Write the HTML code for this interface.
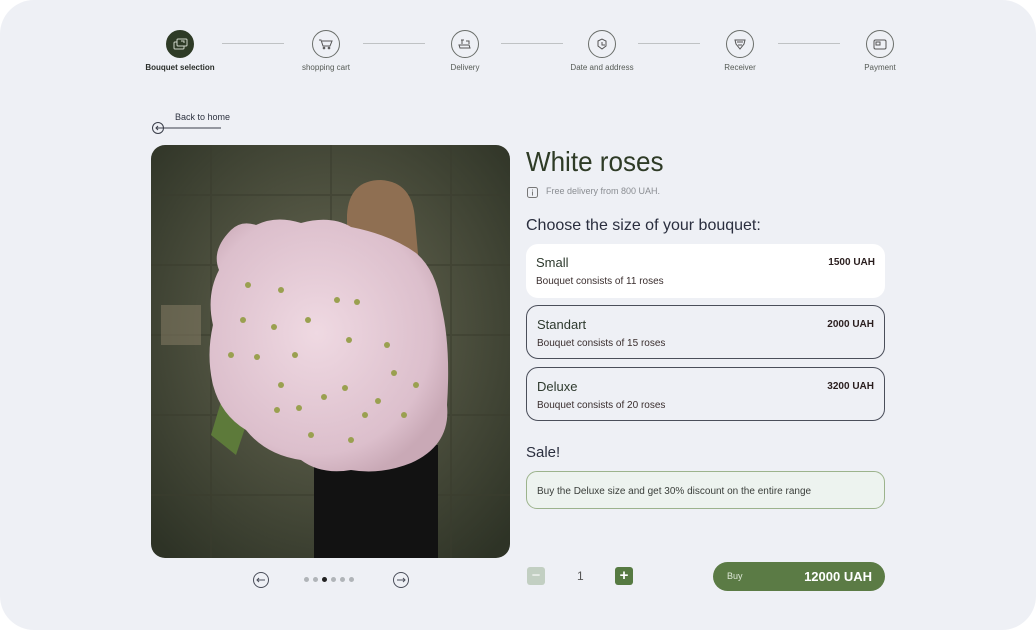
<!DOCTYPE html>
<html><head><meta charset="utf-8"><style>
*{box-sizing:border-box;margin:0;padding:0}
body{width:1036px;height:630px;background:#fff;font-family:"Liberation Sans",Arial,sans-serif;position:relative;overflow:hidden}
.panel{position:absolute;left:0;top:0;width:1036px;height:630px;background:#eef0f5;border-radius:34px}
.step{position:absolute;top:30px;width:28px;height:28px;border-radius:50%;border:1px solid #6a6e6a;display:flex;align-items:center;justify-content:center}
.lbl{position:absolute;top:63px;font-size:8px;color:#555a55;transform:translateX(-50%);white-space:nowrap}
.line{position:absolute;top:43px;height:1px;background:#bfc2c4}
.abs{position:absolute}
.card{position:absolute;left:526px;width:359px;height:54px;border-radius:12px;border:1px solid #4a4e5a}
.card .t{position:absolute;left:10px;top:11px;font-size:13px;color:#2e3a2e}
.card .p{position:absolute;right:10px;top:13px;font-size:10px;font-weight:bold;color:#2a1e1e}
.card .d{position:absolute;left:10px;top:32px;font-size:10px;color:#3a2e2e}
</style></head><body>
<div class="panel"></div>
<div class="step" style="left:166px;background:#2e3b26;border-color:#2e3b26"><svg width="16" height="14" viewBox="0 0 16 14" fill="none" stroke="#cfd6c8" stroke-width="1"><rect x="2" y="5" width="10" height="7" rx="1"/><rect x="5" y="2" width="10" height="7" rx="1" fill="#2e3b26"/><path d="M9 4h3v2"/></svg></div>
<div class="lbl" style="left:180px;color:#2a2e2a;font-weight:bold">Bouquet selection</div>
<div class="line" style="left:222px;width:62px"></div>
<div class="step" style="left:312px"><svg width="16" height="14" viewBox="0 0 16 14" fill="none" stroke="#555" stroke-width="1"><path d="M1 3h2l2 6h7l2-5H4"/><circle cx="6" cy="11" r=".8"/><circle cx="11" cy="11" r=".8"/></svg></div>
<div class="lbl" style="left:326px">shopping cart</div>
<div class="line" style="left:363px;width:62px"></div>
<div class="step" style="left:451px"><svg width="16" height="14" viewBox="0 0 16 14" fill="none" stroke="#555" stroke-width="1"><path d="M2 8h10l1 3H3zM4 3h3M5 3v4M9 4h3v3"/></svg></div>
<div class="lbl" style="left:465px">Delivery</div>
<div class="line" style="left:501px;width:62px"></div>
<div class="step" style="left:588px"><svg width="16" height="14" viewBox="0 0 16 14" fill="none" stroke="#555" stroke-width="1"><path d="M4 4l4-2 4 2v5l-4 3-4-3z"/><path d="M8 5v3h3"/></svg></div>
<div class="lbl" style="left:602px">Date and address</div>
<div class="line" style="left:638px;width:62px"></div>
<div class="step" style="left:726px"><svg width="16" height="14" viewBox="0 0 16 14" fill="none" stroke="#555" stroke-width="1"><path d="M3 3l10 0-1 4-4 5-4-5z"/><path d="M5 5h6M6 8h4"/></svg></div>
<div class="lbl" style="left:740px">Receiver</div>
<div class="line" style="left:778px;width:62px"></div>
<div class="step" style="left:866px"><svg width="16" height="14" viewBox="0 0 16 14" fill="none" stroke="#555" stroke-width="1"><rect x="2" y="3" width="12" height="9" rx="1.5"/><rect x="4" y="5" width="4" height="3"/></svg></div>
<div class="lbl" style="left:880px">Payment</div>
<div class="abs" style="left:175px;top:112px;font-size:9px;color:#2e3340">Back to home</div>
<svg class="abs" style="left:151px;top:121px" width="72" height="14" viewBox="0 0 72 14" fill="none" stroke="#3a3e4a" stroke-width="1"><circle cx="7" cy="7" r="5.5"/><path d="M5 7h65M7 5l-2 2 2 2"/></svg>
<svg class="abs" style="left:151px;top:145px;border-radius:14px" width="359" height="413" viewBox="0 0 359 413">
<defs><radialGradient id="bg" cx="50%" cy="45%" r="70%"><stop offset="0" stop-color="#6a6b55"/><stop offset="1" stop-color="#2e3326"/></radialGradient>
<radialGradient id="fl" cx="45%" cy="45%" r="60%"><stop offset="0" stop-color="#efd9e2"/><stop offset=".8" stop-color="#dcbfcc"/><stop offset="1" stop-color="#c9a9b6"/></radialGradient></defs>
<rect width="359" height="413" fill="url(#bg)"/>
<g stroke="#3b3d2e" stroke-width="2" opacity=".5"><path d="M0 50H359M0 120H359M0 190H359M0 270H359M0 350H359M60 0V413M180 0V120M300 0V413"/></g>
<rect x="10" y="160" width="40" height="40" fill="#8a8068" opacity=".5"/>
<path d="M196 70 Q198 35 230 35 Q262 37 264 75 L268 120 L196 115z" fill="#8f6f52"/>
<path d="M163 300h124v113H163z" fill="#121212"/>
<path d="M75 240l30 10-20 60-25-20z" fill="#5d7a3a"/>
<path d="M80 85 Q90 75 105 80 Q125 70 150 78 Q180 70 200 82 Q240 90 265 108 Q285 125 290 160 Q300 200 296 260 Q300 300 260 318 Q230 330 200 325 Q170 330 150 315 Q115 310 95 285 Q70 270 62 240 Q55 210 62 180 Q55 150 68 125 Q60 105 80 85z" fill="url(#fl)"/>
<g fill="#9aa050"><circle cx="97" cy="140" r="3"/><circle cx="130" cy="145" r="3"/><circle cx="92" cy="175" r="3"/><circle cx="123" cy="182" r="3"/><circle cx="157" cy="175" r="3"/><circle cx="80" cy="210" r="3"/><circle cx="106" cy="212" r="3"/><circle cx="144" cy="210" r="3"/><circle cx="198" cy="195" r="3"/><circle cx="236" cy="200" r="3"/><circle cx="130" cy="240" r="3"/><circle cx="173" cy="252" r="3"/><circle cx="194" cy="243" r="3"/><circle cx="227" cy="256" r="3"/><circle cx="243" cy="228" r="3"/><circle cx="126" cy="265" r="3"/><circle cx="148" cy="263" r="3"/><circle cx="214" cy="270" r="3"/><circle cx="186" cy="155" r="3"/><circle cx="206" cy="157" r="3"/><circle cx="253" cy="270" r="3"/><circle cx="160" cy="290" r="3"/><circle cx="200" cy="295" r="3"/><circle cx="265" cy="240" r="3"/></g>
</svg>
<svg class="abs" style="left:252px;top:571px" width="18" height="18" fill="none" stroke="#4a4e5a"><circle cx="9" cy="9" r="7.5"/><path d="M5 9h8M7 7l-2 2 2 2"/></svg>
<svg class="abs" style="left:392px;top:571px" width="18" height="18" fill="none" stroke="#4a4e5a"><circle cx="9" cy="9" r="7.5"/><path d="M5 9h8M11 7l2 2-2 2"/></svg>
<div class="abs" style="left:304px;top:577px;display:flex;gap:4px"><i style="width:5px;height:5px;border-radius:50%;background:#b0b4b8"></i><i style="width:5px;height:5px;border-radius:50%;background:#b0b4b8"></i><i style="width:5px;height:5px;border-radius:50%;background:#222"></i><i style="width:5px;height:5px;border-radius:50%;background:#b0b4b8"></i><i style="width:5px;height:5px;border-radius:50%;background:#b0b4b8"></i><i style="width:5px;height:5px;border-radius:50%;background:#b0b4b8"></i></div>
<div class="abs" style="left:526px;top:146px;font-size:28px;color:#2e3b26;transform:scaleX(.93);transform-origin:left top;white-space:nowrap">White roses</div>
<svg class="abs" style="left:527px;top:187px" width="11" height="11" fill="none" stroke="#777"><rect x=".5" y=".5" width="10" height="10" rx="2"/><path d="M5.5 4.5v4M5.5 2.5v1"/></svg>
<div class="abs" style="left:546px;top:186px;font-size:9px;color:#8a8d92">Free delivery from 800 UAH.</div>
<div class="abs" style="left:526px;top:217px;font-size:16px;color:#2a2e3e">Choose the size of your bouquet:</div>
<div class="card" style="top:244px;background:#fff;border:none"><div class="t">Small</div><div class="p">1500 UAH</div><div class="d">Bouquet consists of 11 roses</div></div>
<div class="card" style="top:305px"><div class="t">Standart</div><div class="p">2000 UAH</div><div class="d">Bouquet consists of 15 roses</div></div>
<div class="card" style="top:367px"><div class="t">Deluxe</div><div class="p">3200 UAH</div><div class="d">Bouquet consists of 20 roses</div></div>
<div class="abs" style="left:526px;top:444px;font-size:15px;color:#2a2e3e">Sale!</div>
<div class="abs" style="left:526px;top:471px;width:359px;height:38px;border-radius:11px;border:1px solid #9cb38c;background:#edf3ef;font-size:10px;color:#3a3e3a;padding:14px 0 0 10px">Buy the Deluxe size and get 30% discount on the entire range</div>
<div class="abs" style="left:527px;top:567px;width:18px;height:18px;border-radius:3px;background:#c2cfc2;color:#fff;font-size:15px;text-align:center;line-height:17px">−</div>
<div class="abs" style="left:577px;top:569px;font-size:12px;color:#555">1</div>
<div class="abs" style="left:615px;top:567px;width:18px;height:18px;border-radius:3px;background:#567a42;color:#fff;font-size:15px;font-weight:bold;text-align:center;line-height:18px">+</div>
<div class="abs" style="left:713px;top:562px;width:172px;height:29px;border-radius:15px;background:#5b7b45"><span class="abs" style="left:14px;top:9px;font-size:9px;color:#dfe8d8">Buy</span><span class="abs" style="right:13px;top:7px;font-size:13px;font-weight:bold;color:#fff">12000 UAH</span></div>
</body></html>
